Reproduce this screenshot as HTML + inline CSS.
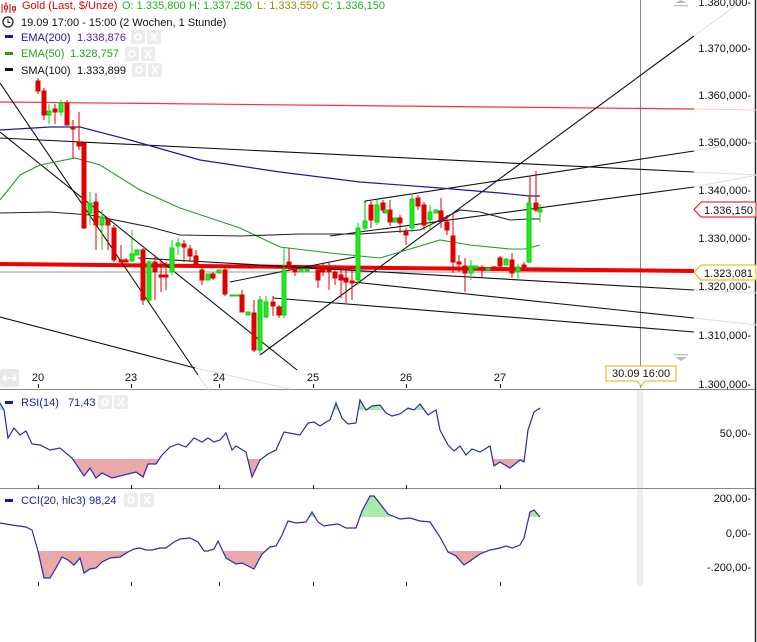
<!DOCTYPE html>
<html><head><meta charset="utf-8"><style>
html,body{margin:0;padding:0;background:#fff;width:757px;height:642px;overflow:hidden}
svg{display:block;font-family:"Liberation Sans",Arial,sans-serif}
</style></head><body>
<svg width="757" height="642" viewBox="0 0 757 642" xmlns="http://www.w3.org/2000/svg">
<defs>
<clipPath id="rl"><rect x="0" y="459" width="640" height="30"/></clipPath>
<clipPath id="rh"><rect x="0" y="390" width="640" height="20"/></clipPath>
<clipPath id="cl"><rect x="0" y="551" width="640" height="40"/></clipPath>
<clipPath id="ch"><rect x="0" y="490" width="640" height="27"/></clipPath>
</defs>
<line x1="640.5" y1="0" x2="640.5" y2="388" stroke="#888" stroke-width="1"/>
<rect x="637" y="389" width="6" height="197" fill="#eee"/>
<line x1="0" y1="389.5" x2="756" y2="389.5" stroke="#888"/>
<line x1="0" y1="488.5" x2="756" y2="488.5" stroke="#888"/>
<line x1="755.5" y1="0" x2="755.5" y2="642" stroke="#222" stroke-width="1.5"/>

<line x1="0" y1="102" x2="694" y2="109" stroke="#ff3030" stroke-width="1.2"/>
<line x1="694" y1="109" x2="757" y2="110" stroke="#fcc" stroke-width="1"/>
<line x1="0" y1="272" x2="694" y2="272" stroke="#999" stroke-width="1"/>
<line x1="0" y1="264" x2="694" y2="271" stroke="#f00000" stroke-width="4"/>

<g stroke="#111" stroke-width="1.1" fill="none">
<line x1="0" y1="83" x2="198" y2="375"/>
<line x1="0" y1="132" x2="297" y2="370"/>
<line x1="0" y1="317" x2="195" y2="368"/>
<line x1="0" y1="138" x2="694" y2="172"/>
<line x1="260" y1="355" x2="694" y2="36"/>
<line x1="365" y1="201" x2="694" y2="151"/>
<line x1="330" y1="236" x2="694" y2="187"/>
<line x1="230" y1="282" x2="355" y2="257"/>
<line x1="138" y1="258" x2="694" y2="290"/>
<line x1="273" y1="298" x2="694" y2="332"/>
<line x1="353" y1="282" x2="694" y2="318"/>
<line x1="365" y1="201" x2="365" y2="232"/>
</g>
<g stroke="#ddd" stroke-width="1">
<line x1="694" y1="36" x2="757" y2="-10"/><line x1="694" y1="151" x2="757" y2="141"/>
<line x1="694" y1="172" x2="757" y2="175"/><line x1="694" y1="187" x2="757" y2="175"/>
<line x1="694" y1="290" x2="757" y2="293"/><line x1="694" y1="318" x2="757" y2="325"/>
<line x1="198" y1="375" x2="210" y2="392"/><line x1="195" y1="368" x2="290" y2="389"/>
</g>

<polyline fill="none" stroke="#1a1aa0" stroke-width="1.2" points="0,130 50,127 80,127 130,140 200,160 280,172 360,182 440,188 500,193 530,196 540,196"/>
<polyline fill="none" stroke="#22a022" stroke-width="1.1" points="0,200 20,175 40,165 75,158 100,165 140,190 180,208 240,228 280,247 330,253 380,258 440,240 470,245 510,249 525,249 540,245"/>
<polyline fill="none" stroke="#222" stroke-width="1.1" points="0,213 50,212 90,215 150,227 180,235 240,236 300,234 360,234 420,230 460,210 480,212 510,220 528,219 540,219"/>

<g stroke-width="1">
<g stroke="#e00000" fill="#e00000">
<line x1="38" y1="78" x2="38" y2="94"/><rect x="36" y="81" width="4" height="10"/>
<line x1="44" y1="88" x2="44" y2="120"/><rect x="42" y="91" width="4" height="24"/>
<line x1="55" y1="104" x2="55" y2="124"/><rect x="53" y="109" width="4" height="3"/>
<line x1="67" y1="100" x2="67" y2="125"/><rect x="65" y="103" width="4" height="22"/>
<line x1="73" y1="120" x2="73" y2="158"/><rect x="71" y="127" width="4" height="2"/>
<line x1="79" y1="112" x2="79" y2="150"/><rect x="77" y="142" width="4" height="4"/>
<line x1="84" y1="143" x2="84" y2="229"/><rect x="82" y="143" width="4" height="85"/>
<line x1="96" y1="193" x2="96" y2="250"/><rect x="94" y="202" width="4" height="23"/>
<line x1="108" y1="219" x2="108" y2="250"/><rect x="106" y="219" width="4" height="6"/>
<line x1="114" y1="225" x2="114" y2="262"/><rect x="112" y="228" width="4" height="32"/>
<line x1="121" y1="245" x2="121" y2="262"/><rect x="119" y="260" width="4" height="2"/>
<line x1="126" y1="258" x2="126" y2="262"/><rect x="124" y="260" width="4" height="2"/>
<line x1="143" y1="248" x2="143" y2="305"/><rect x="141" y="250" width="4" height="50"/>
<line x1="155" y1="255" x2="155" y2="300"/><rect x="153" y="262" width="4" height="10"/>
<line x1="161" y1="260" x2="161" y2="292"/><rect x="159" y="275" width="4" height="2"/>
<line x1="166" y1="262" x2="166" y2="290"/><rect x="164" y="275" width="4" height="2"/>
<line x1="184" y1="240" x2="184" y2="262"/><rect x="182" y="244" width="4" height="3"/>
<line x1="190" y1="245" x2="190" y2="262"/><rect x="188" y="249" width="4" height="7"/>
<line x1="196" y1="250" x2="196" y2="268"/><rect x="194" y="256" width="4" height="9"/>
<line x1="202" y1="265" x2="202" y2="285"/><rect x="200" y="270" width="4" height="10"/>
<line x1="213" y1="272" x2="213" y2="280"/><rect x="211" y="274" width="4" height="4"/>
<line x1="225" y1="268" x2="225" y2="296"/><rect x="223" y="270" width="4" height="24"/>
<line x1="242" y1="290" x2="242" y2="312"/><rect x="240" y="295" width="4" height="17"/>
<line x1="254" y1="300" x2="254" y2="352"/><rect x="252" y="313" width="4" height="37"/>
<line x1="273" y1="296" x2="273" y2="316"/><rect x="271" y="302" width="4" height="4"/>
<line x1="279" y1="305" x2="279" y2="318"/><rect x="277" y="307" width="4" height="8"/>
<line x1="289" y1="248" x2="289" y2="270"/><rect x="287" y="262" width="4" height="4"/>
<line x1="295" y1="266" x2="295" y2="276"/><rect x="293" y="269" width="4" height="3"/>
<line x1="318" y1="265" x2="318" y2="288"/><rect x="316" y="270" width="4" height="10"/>
<line x1="323" y1="264" x2="323" y2="276"/><rect x="321" y="268" width="4" height="4"/>
<line x1="329" y1="262" x2="329" y2="290"/><rect x="327" y="270" width="4" height="2"/>
<line x1="335" y1="265" x2="335" y2="285"/><rect x="333" y="272" width="4" height="6"/>
<line x1="341" y1="268" x2="341" y2="298"/><rect x="339" y="275" width="4" height="5"/>
<line x1="346" y1="270" x2="346" y2="303"/><rect x="344" y="278" width="4" height="4"/>
<line x1="352" y1="268" x2="352" y2="300"/><rect x="350" y="281" width="4" height="2"/>
<line x1="371" y1="200" x2="371" y2="228"/><rect x="369" y="205" width="4" height="15"/>
<line x1="383" y1="200" x2="383" y2="213"/><rect x="381" y="203" width="4" height="7"/>
<line x1="390" y1="200" x2="390" y2="226"/><rect x="388" y="210" width="4" height="12"/>
<line x1="400" y1="215" x2="400" y2="233"/><rect x="398" y="218" width="4" height="5"/>
<line x1="406" y1="228" x2="406" y2="245"/><rect x="404" y="232" width="4" height="3"/>
<line x1="418" y1="195" x2="418" y2="210"/><rect x="416" y="198" width="4" height="8"/>
<line x1="424" y1="202" x2="424" y2="230"/><rect x="422" y="205" width="4" height="20"/>
<line x1="441" y1="198" x2="441" y2="228"/><rect x="439" y="211" width="4" height="9"/>
<line x1="447" y1="215" x2="447" y2="235"/><rect x="445" y="222" width="4" height="8"/>
<line x1="453" y1="212" x2="453" y2="273"/><rect x="451" y="236" width="4" height="26"/>
<line x1="459" y1="255" x2="459" y2="272"/><rect x="457" y="262" width="4" height="2"/>
<line x1="465" y1="258" x2="465" y2="292"/><rect x="463" y="266" width="4" height="7"/>
<line x1="482" y1="265" x2="482" y2="278"/><rect x="480" y="268" width="4" height="2"/>
<line x1="494" y1="266" x2="494" y2="270"/><rect x="492" y="267" width="4" height="2"/>
<line x1="500" y1="256" x2="500" y2="268"/><rect x="498" y="258" width="4" height="8"/>
<line x1="512" y1="253" x2="512" y2="278"/><rect x="510" y="260" width="4" height="13"/>
<line x1="524" y1="262" x2="524" y2="270"/><rect x="522" y="265" width="4" height="2"/>
<line x1="530" y1="176" x2="530" y2="205"/>
<line x1="536" y1="171" x2="536" y2="212"/><rect x="534" y="203" width="4" height="7"/>
</g>
<g stroke="#10d010" fill="#22e822">
<line x1="49" y1="104" x2="49" y2="124"/><rect x="47" y="111" width="4" height="4"/>
<line x1="61" y1="100" x2="61" y2="116"/><rect x="59" y="103" width="4" height="9"/>
<line x1="90" y1="192" x2="90" y2="225"/><rect x="88" y="203" width="4" height="10"/>
<line x1="102" y1="210" x2="102" y2="250"/><rect x="100" y="217" width="4" height="8"/>
<line x1="132" y1="230" x2="132" y2="262"/><rect x="130" y="254" width="4" height="7"/>
<rect x="135" y="250" width="4" height="5"/>
<line x1="149" y1="260" x2="149" y2="302"/><rect x="147" y="262" width="4" height="38"/>
<line x1="172" y1="240" x2="172" y2="275"/><rect x="170" y="248" width="4" height="24"/>
<line x1="178" y1="238" x2="178" y2="255"/><rect x="176" y="243" width="4" height="3"/>
<rect x="206" y="274" width="4" height="6"/>
<rect x="217" y="270" width="4" height="3"/>
<rect x="230" y="295" width="4" height="1"/><rect x="235" y="295" width="4" height="1"/>
<rect x="246" y="312" width="4" height="3"/>
<line x1="260" y1="296" x2="260" y2="355"/><rect x="258" y="300" width="4" height="50"/>
<line x1="266" y1="296" x2="266" y2="318"/><rect x="264" y="302" width="4" height="15"/>
<line x1="284" y1="248" x2="284" y2="318"/><rect x="282" y="270" width="4" height="45"/>
<rect x="299" y="269" width="4" height="3"/><rect x="305" y="269" width="4" height="2"/>
<line x1="358" y1="223" x2="358" y2="285"/><rect x="356" y="228" width="4" height="52"/>
<line x1="365" y1="203" x2="365" y2="232"/><rect x="363" y="221" width="4" height="7"/>
<line x1="377" y1="200" x2="377" y2="225"/><rect x="375" y="205" width="4" height="17"/>
<rect x="384" y="210" width="4" height="3"/><rect x="393" y="218" width="4" height="4"/>
<line x1="412" y1="193" x2="412" y2="232"/><rect x="410" y="199" width="4" height="29"/>
<line x1="430" y1="205" x2="430" y2="230"/><rect x="428" y="212" width="4" height="8"/>
<rect x="434" y="210" width="4" height="3"/>
<line x1="471" y1="260" x2="471" y2="280"/><rect x="469" y="266" width="4" height="7"/>
<rect x="474" y="266" width="4" height="2"/><rect x="486" y="268" width="4" height="2"/>
<rect x="504" y="259" width="4" height="6"/>
<line x1="518" y1="264" x2="518" y2="280"/><rect x="516" y="267" width="4" height="5"/>
<line x1="529" y1="196" x2="529" y2="263"/><rect x="527" y="203" width="4" height="59"/>
<line x1="540" y1="204" x2="540" y2="222"/><rect x="538" y="209" width="4" height="3"/>
</g>
</g>

<!-- legend -->
<g font-size="11">
<g stroke="#e00" stroke-width="1" fill="none"><path d="M2 4v9M6 2v11M10 4v9M14 6v7"/><rect x="4.5" y="6" width="3" height="3" fill="#fff"/><rect x="12.5" y="7" width="3" height="3" fill="#fff"/></g>
<text x="22" y="9" fill="#e00000">Gold (Last, $/Unze)</text>
<text x="122" y="9" fill="#22b022">O: 1.335,800</text>
<text x="189" y="9" fill="#22b022">H: 1.337,250</text>
<text x="257" y="9" fill="#b08000">L: 1.333,550</text>
<text x="322" y="9" fill="#22b022">C: 1.336,150</text>
<circle cx="8" cy="22" r="5" fill="none" stroke="#111" stroke-width="1.2"/><path d="M8 19v3.5h2.5" stroke="#111" fill="none"/>
<text x="21" y="26" fill="#111">19.09 17:00 - 15:00 (2 Wochen, 1 Stunde)</text>
<rect x="5" y="35" width="8" height="3" fill="#1a1aa0"/>
<text x="21" y="41" fill="#1a1aa0">EMA(200)</text><text x="77" y="41" fill="#5a1ab0">1.338,876</text>
<rect x="5" y="52" width="8" height="3" fill="#22a022"/>
<text x="21" y="57" fill="#22a022">EMA(50)</text><text x="70" y="57" fill="#22a022">1.328,757</text>
<rect x="5" y="68" width="8" height="3" fill="#111"/>
<text x="21" y="74" fill="#111">SMA(100)</text><text x="77" y="74" fill="#111">1.333,899</text>
<g fill="#ececec"><rect x="131" y="30" width="14" height="14" rx="2"/><rect x="147" y="30" width="14" height="14" rx="2"/>
<rect x="125" y="47" width="14" height="14" rx="2"/><rect x="141" y="47" width="14" height="14" rx="2"/>
<rect x="132" y="63" width="14" height="14" rx="2"/><rect x="148" y="63" width="14" height="14" rx="2"/></g>
<g fill="none" stroke="#fff" stroke-width="1.6">
<circle cx="138" cy="37" r="3"/><path d="M151 33l6 8M157 33l-6 8"/>
<circle cx="132" cy="54" r="3"/><path d="M145 50l6 8M151 50l-6 8"/>
<circle cx="139" cy="70" r="3"/><path d="M152 66l6 8M158 66l-6 8"/></g>
</g>

<g font-size="11" fill="#111" text-anchor="end">
<text x="751" y="6">1.380,000-</text>
<text x="751" y="52">1.370,000-</text>
<text x="751" y="99">1.360,000-</text>
<text x="751" y="146">1.350,000-</text>
<text x="751" y="194">1.340,000-</text>
<text x="751" y="242">1.330,000-</text>
<text x="751" y="290">1.320,000-</text>
<text x="751" y="339">1.310,000-</text>
<text x="751" y="388">1.300,000-</text>
<text x="751" y="437">50,00-</text>
<text x="751" y="502">200,00-</text>
<text x="751" y="537">0,00-</text>
<text x="751" y="571">-.200,00-</text>
</g>
<path d="M694 209.5l7-7.5h55v15h-55z" fill="#fff" stroke="#e00" stroke-width="1"/>
<text x="704" y="214" font-size="11" fill="#111">1.336,150</text>
<path d="M694 272.5l7-7.5h55v15h-55z" fill="#fff" stroke="#e0b000" stroke-width="1"/>
<text x="704" y="277" font-size="11" fill="#111">1.323,081</text>
<path d="M675 3l6-3 6 3zM674 5h14v1.3h-14z" fill="#bbb"/>
<path d="M674 354h14v1.3h-14zM675 357h12l-6 4z" fill="#bbb"/>
<path d="M606 366h70v15h-31l-4 5-4-5h-31z" fill="#fff" stroke="#e0b000"/>
<text x="612" y="377" font-size="11" fill="#111">30.09 16:00</text>

<rect x="0" y="369" width="19" height="18" rx="3" fill="#e8e8e8"/>
<path d="M3 378h13M3 378l3-3M3 378l3 3M16 378l-3-3M16 378l-3 3" stroke="#fff" stroke-width="1.6" fill="none"/>
<g font-size="11" fill="#111" text-anchor="middle">
<text x="38" y="381">20</text><text x="131" y="381">23</text><text x="219" y="381">24</text>
<text x="313" y="381">25</text><text x="406" y="381">26</text><text x="500" y="381">27</text></g>
<g stroke="#111"><path d="M38.5 384v4M131.5 384v4M219.5 384v4M313.5 384v4M406.5 384v4M500.5 384v4"/>
<path d="M38.5 485v4M131.5 485v4M219.5 485v4M313.5 485v4M406.5 485v4M500.5 485v4"/>
<path d="M38.5 582v4M131.5 582v4M219.5 582v4M313.5 582v4M406.5 582v4M500.5 582v4"/></g>

<polygon clip-path="url(#rl)" fill="#eaa8a8" points="0,403 4,410 8,438 14,428 20,435 26,431 32,444 40,445 50,450 60,448 72,458 84,476 90,468 96,478 102,473 112,478 136,472 143,477 148,464 156,464 162,455 170,447 178,444 186,447 194,438 202,442 208,438 214,442 220,440 226,433 232,450 236,446 246,452 252,477 260,460 268,454 276,450 284,432 300,435 308,423 314,422 320,426 326,422 330,420 336,403 342,418 348,424 356,423 360,400 366,410 372,406 380,405 386,413 392,416 400,414 408,408 414,410 420,404 428,415 436,410 440,430 448,445 454,451 460,446 466,455 472,449 480,452 490,446 494,466 500,462 510,468 520,460 524,462 528,430 534,412 540,408 540,459 0,459"/>
<polygon clip-path="url(#rh)" fill="#a8eaa8" points="0,403 4,410 8,438 14,428 20,435 26,431 32,444 40,445 50,450 60,448 72,458 84,476 90,468 96,478 102,473 112,478 136,472 143,477 148,464 156,464 162,455 170,447 178,444 186,447 194,438 202,442 208,438 214,442 220,440 226,433 232,450 236,446 246,452 252,477 260,460 268,454 276,450 284,432 300,435 308,423 314,422 320,426 326,422 330,420 336,403 342,418 348,424 356,423 360,400 366,410 372,406 380,405 386,413 392,416 400,414 408,408 414,410 420,404 428,415 436,410 440,430 448,445 454,451 460,446 466,455 472,449 480,452 490,446 494,466 500,462 510,468 520,460 524,462 528,430 534,412 540,408 540,410 0,410"/>
<polyline fill="none" stroke="#2a2ab0" stroke-width="1.2" points="0,403 4,410 8,438 14,428 20,435 26,431 32,444 40,445 50,450 60,448 72,458 84,476 90,468 96,478 102,473 112,478 136,472 143,477 148,464 156,464 162,455 170,447 178,444 186,447 194,438 202,442 208,438 214,442 220,440 226,433 232,450 236,446 246,452 252,477 260,460 268,454 276,450 284,432 300,435 308,423 314,422 320,426 326,422 330,420 336,403 342,418 348,424 356,423 360,400 366,410 372,406 380,405 386,413 392,416 400,414 408,408 414,410 420,404 428,415 436,410 440,430 448,445 454,451 460,446 466,455 472,449 480,452 490,446 494,466 500,462 510,468 520,460 524,462 528,430 534,412 540,408"/>
<rect x="5" y="401" width="8" height="3" fill="#1a1aa0"/>
<text x="21" y="406" font-size="11" fill="#1a1aa0">RSI(14)</text><text x="68" y="406" font-size="11" fill="#1a1aa0">71,43</text>
<rect x="98" y="395" width="14" height="14" rx="2" fill="#ececec"/><rect x="114" y="395" width="14" height="14" rx="2" fill="#ececec"/>
<g fill="none" stroke="#fff" stroke-width="1.6"><circle cx="105" cy="402" r="3"/><path d="M118 398l6 8M124 398l-6 8"/></g>

<polygon clip-path="url(#cl)" fill="#eaa8a8" points="0,523 12,525 26,527 32,530 38,551 44,578 50,578 56,568 62,557 68,560 74,565 80,558 84,573 90,569 96,568 102,562 110,558 120,557 128,552 134,549 140,548 146,550 152,550 160,548 166,548 174,542 180,539 190,538 198,542 204,551 208,551 214,549 218,541 226,558 236,564 242,563 254,569 262,554 270,547 276,546 282,535 288,521 296,523 306,522 312,512 318,522 324,526 330,525 338,524 346,528 356,528 362,511 370,496 374,496 388,514 400,519 410,518 420,521 430,522 440,537 448,552 456,556 464,565 470,561 480,554 490,550 500,548 506,546 512,548 520,545 524,538 530,512 534,510 540,517 540,551 0,551"/>
<polygon clip-path="url(#ch)" fill="#a8eaa8" points="0,523 12,525 26,527 32,530 38,551 44,578 50,578 56,568 62,557 68,560 74,565 80,558 84,573 90,569 96,568 102,562 110,558 120,557 128,552 134,549 140,548 146,550 152,550 160,548 166,548 174,542 180,539 190,538 198,542 204,551 208,551 214,549 218,541 226,558 236,564 242,563 254,569 262,554 270,547 276,546 282,535 288,521 296,523 306,522 312,512 318,522 324,526 330,525 338,524 346,528 356,528 362,511 370,496 374,496 388,514 400,519 410,518 420,521 430,522 440,537 448,552 456,556 464,565 470,561 480,554 490,550 500,548 506,546 512,548 520,545 524,538 530,512 534,510 540,517 540,517 0,517"/>
<polyline fill="none" stroke="#2a2ab0" stroke-width="1.2" points="0,523 12,525 26,527 32,530 38,551 44,578 50,578 56,568 62,557 68,560 74,565 80,558 84,573 90,569 96,568 102,562 110,558 120,557 128,552 134,549 140,548 146,550 152,550 160,548 166,548 174,542 180,539 190,538 198,542 204,551 208,551 214,549 218,541 226,558 236,564 242,563 254,569 262,554 270,547 276,546 282,535 288,521 296,523 306,522 312,512 318,522 324,526 330,525 338,524 346,528 356,528 362,511 370,496 374,496 388,514 400,519 410,518 420,521 430,522 440,537 448,552 456,556 464,565 470,561 480,554 490,550 500,548 506,546 512,548 520,545 524,538 530,512 534,510 540,517"/>
<rect x="5" y="499" width="8" height="3" fill="#1a1aa0"/>
<text x="21" y="504" font-size="11" fill="#1a1aa0">CCI(20, hlc3)</text><text x="89" y="504" font-size="11" fill="#1a1aa0">98,24</text>
<rect x="124" y="493" width="14" height="14" rx="2" fill="#ececec"/><rect x="140" y="493" width="14" height="14" rx="2" fill="#ececec"/>
<g fill="none" stroke="#fff" stroke-width="1.6"><circle cx="131" cy="500" r="3"/><path d="M144 496l6 8M150 496l-6 8"/></g>
</svg>
</body></html>
